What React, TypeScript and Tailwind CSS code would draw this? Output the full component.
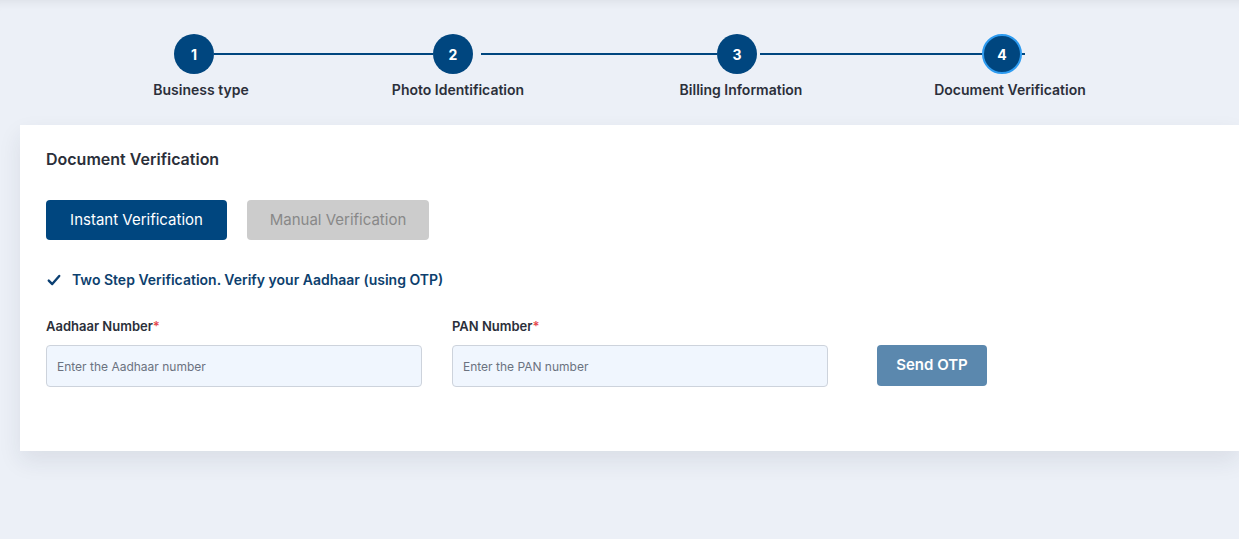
import React from "react";

const steps = [
  { n: 1, label: "Business type" },
  { n: 2, label: "Photo Identification" },
  { n: 3, label: "Billing Information" },
  { n: 4, label: "Document Verification" },
];

const Circle: React.FC<{ n: number; active?: boolean }> = ({ n, active }) => (
  <div
    className={
      "flex h-10 w-10 shrink-0 items-center justify-center rounded-full bg-[#00467f] text-[14px] font-bold text-white " +
      (active ? "border-2 border-[#2d9bf0]" : "")
    }
  >
    {n}
  </div>
);

const Line: React.FC<{ w: string }> = ({ w }) => <div className={"h-[2px] bg-[#00467f] " + w} />;

const App: React.FC = () => {
  return (
    <div
      className="min-h-[539px] bg-[#ecf0f7] shadow-[inset_0_10px_10px_-8px_rgba(0,0,0,0.07)]"
      style={{ fontFamily: "Inter, 'Noto Sans', sans-serif" }}
    >
      {/* stepper */}
      <div className="pt-[34px]">
        <div className="flex items-center pl-[174px]">
          <Circle n={1} />
          <Line w="w-[219px]" />
          <Circle n={2} />
          <div className="w-2" />
          <Line w="w-[236px]" />
          <Circle n={3} />
          <div className="w-[3px]" />
          <Line w="w-[222px]" />
          <Circle n={4} active />
          <Line w="w-[3px]" />
        </div>
        <div className="mt-[6px] flex text-[14px] font-semibold leading-5 text-[#2b2f3a]">
          <div className="ml-[101px] w-[200px] text-center">{steps[0].label}</div>
          <div className="ml-[57px] w-[200px] text-center">{steps[1].label}</div>
          <div className="ml-[83px] w-[200px] text-center">{steps[2].label}</div>
          <div className="ml-[69px] w-[200px] text-center">{steps[3].label}</div>
        </div>
      </div>

      {/* card */}
      <div className="ml-5 mt-[25px] bg-white pb-16 pl-[26px] pt-6 shadow-[0_10px_22px_rgba(30,40,70,0.09)]">
        <h2 className="text-[16px] font-semibold leading-5 text-[#2b2f3a]">Document Verification</h2>

        <div className="mt-[31px] flex gap-5">
          <button className="h-10 w-[181px] rounded bg-[#00467f] text-[15px] text-white">Instant Verification</button>
          <button className="h-10 w-[182px] rounded bg-[#cccccc] text-[15px] text-[#888888]">Manual Verification</button>
        </div>

        <div className="mt-[30px] flex items-center gap-[11px] text-[14px] font-semibold leading-5 text-[#0d3f6e]">
          <svg width="14" height="14" viewBox="0 0 24 24" fill="none" stroke="#0b3f72" strokeWidth="4" strokeLinecap="round" strokeLinejoin="round" className="ml-[1px]">
            <path d="M3 13l6 6L21 5" />
          </svg>
          <span>Two Step Verification. Verify your Aadhaar (using OTP)</span>
        </div>

        <div className="mt-[26px] flex items-end">
          <div className="w-[376px]">
            <label className="block text-[13px] font-semibold leading-5 text-[#2b2f3a]">
              Aadhaar Number<span className="text-[#e5484d]">*</span>
            </label>
            <input
              placeholder="Enter the Aadhaar number"
              className="mt-[9px] h-[42px] w-full rounded border border-[#cdd3dc] bg-[#f0f6fe] px-[10px] text-[12px] outline-none placeholder:text-[#6b7280]"
            />
          </div>
          <div className="ml-[30px] w-[376px]">
            <label className="block text-[13px] font-semibold leading-5 text-[#2b2f3a]">
              PAN Number<span className="text-[#e5484d]">*</span>
            </label>
            <input
              placeholder="Enter the PAN number"
              className="mt-[9px] h-[42px] w-full rounded border border-[#cdd3dc] bg-[#f0f6fe] px-[10px] text-[12px] outline-none placeholder:text-[#6b7280]"
            />
          </div>
          <button className="mb-[1px] ml-[49px] h-[41px] w-[110px] rounded bg-[#5b88ae] text-[15px] font-semibold text-white">
            Send OTP
          </button>
        </div>
      </div>
    </div>
  );
};

export default App;
